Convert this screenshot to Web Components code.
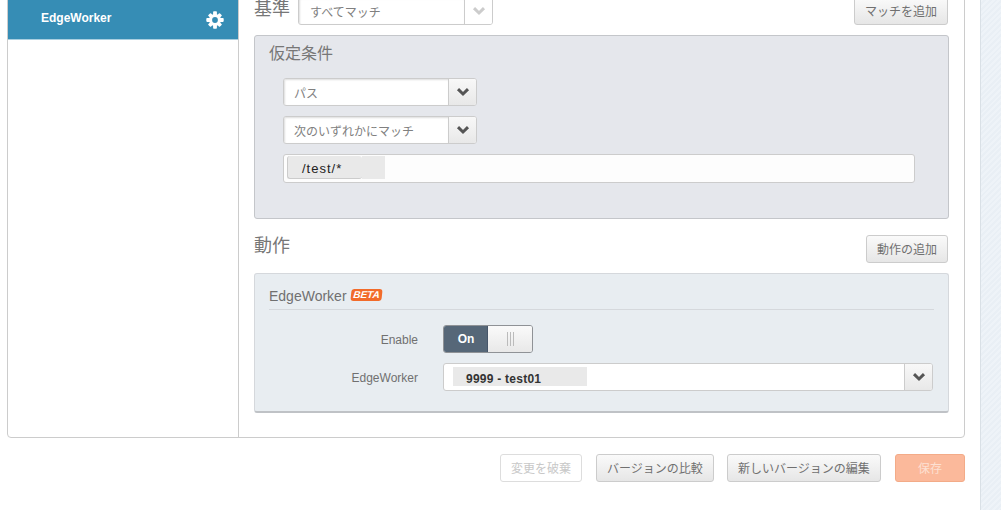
<!DOCTYPE html>
<html lang="ja"><head><meta charset="utf-8"><title>EdgeWorker</title>
<style>
html,body{margin:0;padding:0;height:510px;overflow:hidden;background:#fff}
body{font:12px "Liberation Sans","Noto Sans CJK JP",sans-serif;color:#666}
</style></head><body>
<pm-page>
  <pm-sidebar slot="side" label="EdgeWorker"></pm-sidebar>
  <pm-row class="r">
    <span style="display:flex;align-items:flex-start;gap:8px">
      <pm-title style="margin-top:-2px">基準</pm-title>
      <pm-select width="195" value="すべてマッチ" mode="plain"></pm-select>
    </span>
    <pm-btn w="94">マッチを追加</pm-btn>
  </pm-row>
  <pm-criteria title="仮定条件">
    <pm-select width="194" value="パス"></pm-select>
    <pm-select width="194" value="次のいずれかにマッチ"></pm-select>
    <pm-tag-input></pm-tag-input>
  </pm-criteria>
  <pm-row style="margin-top:16px;align-items:flex-start">
    <pm-title style="margin-top:-3px">動作</pm-title>
    <pm-btn w="82">動作の追加</pm-btn>
  </pm-row>
  <pm-behavior></pm-behavior>
  <pm-btn slot="foot" w="82" kind="ghost">変更を破棄</pm-btn>
  <pm-btn slot="foot" w="118">バージョンの比較</pm-btn>
  <pm-btn slot="foot" w="154" style="margin-left:-1px">新しいバージョンの編集</pm-btn>
  <pm-btn slot="foot" w="70" kind="save">保存</pm-btn>
</pm-page>
<script>
const chev = c => `<svg width="14" height="10" viewBox="0 0 14 10"><path d="M2 2.2 7 7 12 2.2" fill="none" stroke="${c}" stroke-width="3"/></svg>`;
function def(name, html, init){
  customElements.define(name, class extends HTMLElement{
    constructor(){super();this.attachShadow({mode:'open'});}
    connectedCallback(){this.shadowRoot.innerHTML = typeof html==='function'?html(this):html;}
  });
}
def('pm-page',`<style>
:host{display:flex;width:1001px;height:510px;overflow:hidden;box-sizing:border-box}
.left{width:980px;flex:none;padding-left:7px;box-sizing:border-box}
.strip{flex:1;border-left:1px solid #d9e0e6;background:repeating-linear-gradient(135deg,#eef3f8 0 2px,#e9eff5 2px 4px)}
.panel{width:958px;height:458px;margin-top:-20px;box-sizing:border-box;border:1px solid #ccc;border-radius:0 0 4px 4px;display:flex;background:#fff}
.side{width:231px;flex:none;border-right:1px solid #ccc;box-sizing:border-box}
.main{flex:1;padding:16px 15px 0 15px;min-width:0}
.foot{display:flex;justify-content:flex-end;gap:14px;width:958px;margin-top:16px}
</style><div class="left"><div class="panel"><div class="side"><slot name="side"></slot></div><div class="main"><slot></slot></div></div><div class="foot"><slot name="foot"></slot></div></div><div class="strip"></div>`);
def('pm-sidebar',h=>`<style>
:host{display:flex;align-items:flex-end;height:59px;background:#368db5;color:#fff;box-sizing:border-box;border-bottom:1px solid #a9cfe0;font:bold 12px "Liberation Sans",sans-serif}
.in{display:flex;align-items:center;justify-content:space-between;width:100%;padding:0 14px 0 33px;height:36px;margin-bottom:1px}
span{position:relative;top:-2px}
svg{display:block}
</style><div class="in"><span>${h.getAttribute('label')}</span><svg width="18" height="18" viewBox="0 0 18 18"><g fill="#fff"><rect x="7.1" y="0.3" width="3.8" height="17.4" rx="0.8"/><rect x="7.1" y="0.8" width="3.8" height="16.4" rx="0.8" transform="rotate(45 9 9)"/><rect x="7.1" y="0.3" width="3.8" height="17.4" rx="0.8" transform="rotate(90 9 9)"/><rect x="7.1" y="0.8" width="3.8" height="16.4" rx="0.8" transform="rotate(135 9 9)"/></g><circle cx="9" cy="9" r="6" fill="#fff"/><circle cx="9" cy="9" r="2.9" fill="#368db5"/></svg></div>`);
def('pm-row',`<style>:host{display:flex;justify-content:space-between;align-items:flex-start;padding-right:1px}</style><slot></slot>`);
def('pm-title',`<style>:host{display:block;font:18px/28px "Liberation Sans","Noto Sans CJK JP",sans-serif;color:#777}</style><slot></slot>`);
def('pm-btn',h=>{
  const k=h.getAttribute('kind');
  const st=k==='ghost'?'background:#fff;color:#c8c8c8;border-color:#ddd':k==='save'?'background:#fbb99b;color:#fde0d2;border-color:#f3ab88':'background:linear-gradient(#fafafa,#e6e6e6);color:#707070;border-color:#ccc';
  return `<style>:host{display:block;flex:none}
  div{box-sizing:border-box;width:${h.getAttribute('w')}px;height:28px;padding-bottom:2px;border:1px solid;border-radius:3px;display:flex;align-items:center;justify-content:center;font:12px "Liberation Sans","Noto Sans CJK JP",sans-serif;${st}}</style><div><slot></slot></div>`;
});
def('pm-select',h=>{
  const plain=h.getAttribute('mode')==='plain';
  return `<style>:host{display:block;width:${h.getAttribute('width')}px}
  .s{box-sizing:border-box;height:28px;display:flex;border:1px solid #ccc;border-radius:3px;overflow:hidden;background:#fff}
  .v{flex:1;padding-left:${plain?11:10}px;display:flex;align-items:center;font:12px "Liberation Sans","Noto Sans CJK JP",sans-serif;color:#808080;box-shadow:inset 1px 1px 2px #ddd}
  .a{width:27px;flex:none;display:flex;align-items:center;justify-content:center;border-left:1px solid #ccc;background:${plain?'#fff':'linear-gradient(#f8f8f8,#e8e8e8)'}}
  svg{display:block}</style><div class="s"><div class="v">${h.getAttribute('value')}</div><div class="a">${chev(plain?'#ccc':'#555')}</div></div>`;
});
def('pm-criteria',h=>`<style>:host{display:block;box-sizing:border-box;height:184px;margin:10px 0 0;width:695px;background:#e5e7ec;border:1px solid #c4c6ca;border-radius:3px;padding:6px 14px 0}
h3{margin:0 0 12px;font:normal 16px/24px "Liberation Sans","Noto Sans CJK JP",sans-serif;color:#777}
.b{display:flex;flex-direction:column;gap:10px;padding-left:14px}</style><h3>${h.getAttribute('title')}</h3><div class="b"><slot></slot></div>`);
def('pm-tag-input',`<style>:host{display:block;box-sizing:border-box;width:632px;height:29px;margin-top:0;background:#fdfdfd;border:1px solid #ccc;border-radius:3px;padding:1px 3px}
.t{display:flex;height:23px}
.a{width:75px;box-sizing:border-box;height:23px;background:#e9e9e9;border-left:1px solid #ccc;border-bottom:1px solid #ccc;border-radius:3px;padding-left:14px;font:13px/26px "Liberation Sans",sans-serif;color:#222;letter-spacing:1px;white-space:nowrap}
.b{width:23px;background:#e9e9e9}</style><div class="t"><div class="a">/test/*</div><div class="b"></div></div>`);
def('pm-behavior',`<style>:host{display:block;box-sizing:border-box;width:695px;height:140px;margin-top:10px;background:#e8edf1;border:1px solid #d5d8dc;border-bottom:2px solid #bfc2c6;border-radius:3px;padding:0 14px}
.hd{height:35px;border-bottom:1px solid #d5d8dc;box-sizing:content-box;display:flex;align-items:flex-end;gap:4px;font:14px/27px "Liberation Sans",sans-serif;color:#707070;width:665px}
.hd span{position:relative;top:1px}
.beta{display:inline-flex;align-items:center;justify-content:center;width:31px;height:12px;margin-bottom:8px;background:#f26b2a;border-radius:3px;color:#fff;font:italic bold 10px/12px "Liberation Sans",sans-serif;transform:skewX(-6deg)}
.row{display:flex;align-items:center;height:28px;margin-top:10px}
label{width:149px;text-align:right;margin-right:25px;padding-top:2px;font:12px "Liberation Sans",sans-serif;color:#707070}
.tg{display:flex;width:90px;height:28px;box-sizing:border-box;border:1px solid #8f9296;border-radius:3px;overflow:hidden}
.on{width:44px;background:#566778;color:#fff;font:bold 12px/26px "Liberation Sans",sans-serif;text-align:center;box-shadow:inset -1px 0 0 #47566a}
.off{flex:1;background:linear-gradient(#fafafa,#e8e8e8);display:flex;align-items:center;justify-content:center;gap:2px}
.off i{display:block;width:1px;height:14px;background:#bbb}
.sel{box-sizing:border-box;width:490px;height:28px;display:flex;border:1px solid #ccc;border-radius:3px;overflow:hidden;background:#fff}
.v{flex:1;padding:3px 0 0 9px}
.v div{width:134px;height:19px;box-sizing:border-box;background:#e9e9e9;padding-left:13px;font:bold 12px/24px "Liberation Sans",sans-serif;color:#333;letter-spacing:.25px}
.a{width:27px;display:flex;align-items:center;justify-content:center;border-left:1px solid #ccc;background:linear-gradient(#f8f8f8,#e8e8e8)}
svg{display:block}</style>
<div class="hd"><span>EdgeWorker</span><b class="beta">BETA</b></div>
<div class="row" style="margin-top:15px"><label>Enable</label><div class="tg"><div class="on">On</div><div class="off"><i></i><i></i><i></i></div></div></div>
<div class="row"><label>EdgeWorker</label><div class="sel"><div class="v"><div>9999 - test01</div></div><div class="a">${chev('#555')}</div></div></div>`);
</script>
</body></html>
